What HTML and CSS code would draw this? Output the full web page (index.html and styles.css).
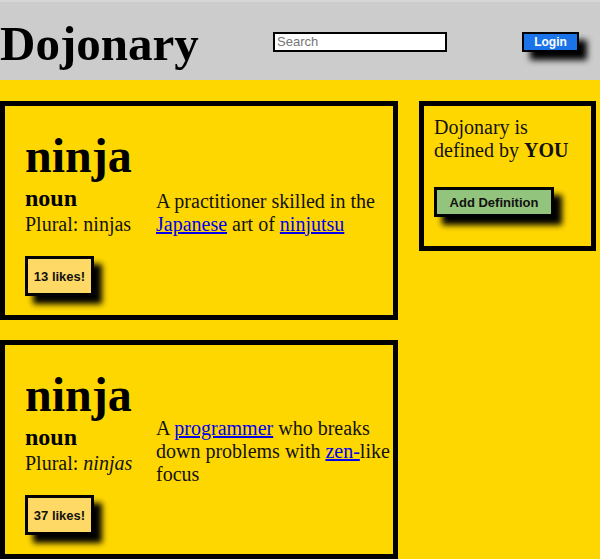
FILE: index.html
```html
<!DOCTYPE html>
<html>
<head>
<meta charset="utf-8">
<title>Dojonary</title>
<link rel="stylesheet" href="styles.css">
</head>
<body>
<header class="topbar">
  <h1 class="brand">Dojonary</h1>
  <input class="search" type="text" placeholder="Search">
  <button class="login">Login</button>
</header>
<main class="layout">
  <section class="entries">
    <article class="card">
      <div class="card-left">
        <h2 class="word">ninja</h2>
        <div class="pos">noun</div>
        <div class="plural">Plural: ninjas</div>
        <button class="likes">13 likes!</button>
      </div>
      <p class="definition">A practitioner skilled in the <a href="#">Japanese</a> art of <a href="#">ninjutsu</a></p>
    </article>
    <article class="card">
      <div class="card-left">
        <h2 class="word">ninja</h2>
        <div class="pos">noun</div>
        <div class="plural">Plural: <em>ninjas</em></div>
        <button class="likes">37 likes!</button>
      </div>
      <p class="definition">A <a href="#">programmer</a> who breaks down problems with <a href="#">zen-</a>like focus</p>
    </article>
  </section>
  <aside class="sidebar">
    <p class="tagline">Dojonary is defined by <strong>YOU</strong></p>
    <button class="add">Add Definition</button>
  </aside>
</main>
</body>
</html>
```
FILE: styles.css
```css
* {
  box-sizing: border-box;
}
html, body {
  margin: 0;
  padding: 0;
}
body {
  background: #ffd700;
  font-family: "Liberation Serif", "Times New Roman", serif;
  color: #111;
}
.topbar {
  display: flex;
  align-items: center;
  height: 80px;
  padding-top: 1px;
  background: #cccccc;
  border-top: 2px solid #d6d6d6;
}
.brand {
  margin: 4px 0 0 0;
  width: 199px;
  font-size: 49px;
  font-weight: bold;
  line-height: normal;
  color: #000;
}
.search {
  margin-left: 74px;
  width: 174px;
  height: 20px;
  padding: 1px 2px;
  border: 2px solid #000;
  background: #fff;
  font-family: "Liberation Sans", Arial, sans-serif;
  font-size: 13px;
  outline: none;
}
.search::placeholder {
  color: #757575;
}
.login {
  margin-left: 75px;
  width: 57px;
  height: 20px;
  padding: 0;
  border: 2px solid #000;
  background: #1a73e8;
  color: #fff;
  font-family: "Liberation Sans", Arial, sans-serif;
  font-size: 12px;
  font-weight: bold;
  box-shadow: 8px 8px 6px #000;
}
.layout {
  display: flex;
  align-items: flex-start;
  padding-top: 21px;
}
.entries {
  display: flex;
  flex-direction: column;
  gap: 20px;
  width: 398px;
}
.card {
  display: flex;
  align-items: center;
  border: 5px solid #000;
  padding: 23px 3px 19px 20px;
}
.card-left {
  width: 131px;
  flex: none;
}
.word {
  margin: 0;
  font-size: 48px;
  font-weight: bold;
  line-height: 53px;
  color: #000;
}
.pos {
  margin-top: 3px;
  font-size: 24px;
  font-weight: bold;
  line-height: 27px;
  color: #000;
}
.plural {
  margin-top: 1px;
  font-size: 20px;
  line-height: 22px;
}
.likes {
  display: block;
  margin-top: 21px;
  width: 69px;
  height: 40px;
  padding: 0;
  border: 3px solid #000;
  background: #ffd966;
  color: #111;
  font-family: "Liberation Sans", Arial, sans-serif;
  font-size: 13px;
  font-weight: bold;
  box-shadow: 8px 8px 6px #000;
}
.definition {
  flex: 1;
  margin: 0;
  font-size: 20px;
  line-height: 23px;
}
.definition a {
  color: #0000ee;
}
.sidebar {
  margin-left: 21px;
  width: 177px;
  border: 5px solid #000;
  padding: 10px 10px 29px 10px;
}
.tagline {
  margin: 0;
  font-size: 20px;
  line-height: 23px;
}
.add {
  display: block;
  margin-top: 25px;
  width: 120px;
  height: 30px;
  padding: 0;
  border: 3px solid #000;
  background: #93c47d;
  color: #111;
  font-family: "Liberation Sans", Arial, sans-serif;
  font-size: 13px;
  font-weight: bold;
  box-shadow: 8px 8px 6px #000;
}
```
